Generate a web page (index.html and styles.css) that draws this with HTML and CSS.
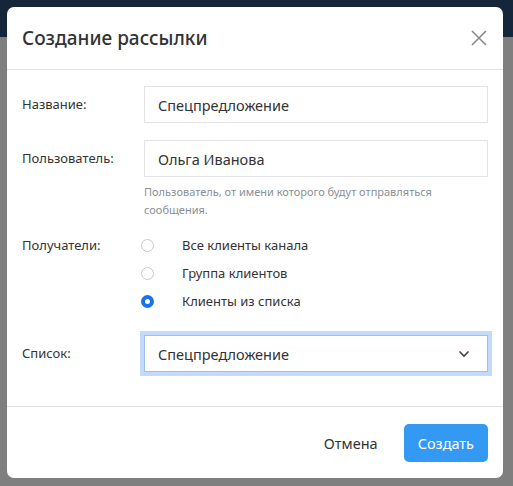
FILE: index.html
```html
<!DOCTYPE html>
<html lang="ru">

<head>
    <meta charset="UTF-8">
    <meta name="viewport" content="width=device-width, initial-scale=1.0">
    <title>Создание рассылки</title>
    <link rel="stylesheet" href="styles.css">
</head>

<body>
    <div class="topbar"></div>

    <div class="overlay">
        <div class="modal">
            <!-- Header -->
            <div class="modal-header">
                <h2>Создание рассылки</h2>
                <button class="close" aria-label="Закрыть">
                    <svg width="16" height="16" viewBox="0 0 16 16">
                        <path d="M1 1 L15 15 M15 1 L1 15" stroke="#8a8a8a" stroke-width="1.6" fill="none" />
                    </svg>
                </button>
            </div>

            <!-- Body -->
            <div class="modal-body">
                <div class="row">
                    <label class="label">Название:</label>
                    <div class="field">
                        <input type="text" class="input" value="Спецпредложение">
                    </div>
                </div>

                <div class="row with-help">
                    <label class="label">Пользователь:</label>
                    <div class="field">
                        <input type="text" class="input" value="Ольга Иванова">
                        <div class="help">Пользователь, от имени которого будут отправляться сообщения.</div>
                    </div>
                </div>

                <div class="row radio-row">
                    <label class="label">Получатели:</label>
                    <div class="field">
                        <label class="radio"><span class="dot"></span>Все клиенты канала</label>
                        <label class="radio"><span class="dot"></span>Группа клиентов</label>
                        <label class="radio"><span class="dot checked"></span>Клиенты из списка</label>
                    </div>
                </div>

                <div class="row">
                    <label class="label">Список:</label>
                    <div class="field">
                        <div class="select">
                            <span>Спецпредложение</span>
                            <svg width="12" height="8" viewBox="0 0 12 8">
                                <path d="M1.5 1.5 L6 6 L10.5 1.5" stroke="#444" stroke-width="1.6" fill="none" />
                            </svg>
                        </div>
                    </div>
                </div>
            </div>

            <!-- Footer -->
            <div class="modal-footer">
                <button class="btn-link">Отмена</button>
                <button class="btn-primary">Создать</button>
            </div>
        </div>
    </div>
</body>

</html>
```

FILE: styles.css
```css
body {
    margin: 0;
    padding: 0;
    font-family: "Noto Sans", "Open Sans", sans-serif;
    background: #7f7f7f;
    color: #333;
    height: 486px;
    overflow: hidden;
}

.topbar {
    height: 37px;
    background: #15263a;
}

.overlay {
    margin-top: -30px;
    padding: 0 10px 0 7px;
}

.modal {
    width: 496px;
    background: #fff;
    border-radius: 7px;
}

.modal-header {
    display: flex;
    align-items: center;
    justify-content: space-between;
    height: 62px;
    padding: 0 16px 0 15px;
    border-bottom: 1px solid #e2e2e2;
}

.modal-header h2 {
    margin: 0;
    font-size: 19px;
    font-weight: 500;
    color: #333;
}

.close {
    border: none;
    background: none;
    padding: 0;
    display: flex;
}

.modal-body {
    padding: 16px 15px 34px 15px;
}

.row {
    display: flex;
    margin-bottom: 17px;
}

.row.with-help {
    margin-bottom: 12px;
}

.row.radio-row {
    margin-bottom: 20px;
}

.row:last-child {
    margin-bottom: 0;
}

.label {
    width: 122px;
    font-size: 13px;
    color: #333;
    line-height: 37px;
}

.radio-row .label {
    line-height: 28px;
}

.field {
    flex: 1;
}

.input {
    display: block;
    width: 100%;
    height: 37px;
    box-sizing: border-box;
    border: 1px solid #e3e3e3;
    padding: 0 13px;
    font-family: inherit;
    font-size: 14.5px;
    color: #333;
    outline: none;
}

.help {
    margin-top: 6px;
    font-size: 11px;
    line-height: 18px;
    color: #8b8f96;
}

.radio {
    display: flex;
    align-items: center;
    height: 28px;
    font-size: 13px;
    color: #333;
}

.dot {
    width: 11px;
    height: 11px;
    border: 1px solid #c8c8c8;
    border-radius: 50%;
    margin-left: -3px;
    margin-right: 28px;
}

.dot.checked {
    width: 5px;
    height: 5px;
    border: 4px solid #1a73e8;
}

.select {
    display: flex;
    align-items: center;
    justify-content: space-between;
    height: 37px;
    box-sizing: border-box;
    border: 1px solid #9ec0ea;
    box-shadow: 0 0 0 4px #c3dbfa;
    padding: 0 17px 0 13px;
    font-size: 14.5px;
    color: #333;
}

.modal-footer {
    display: flex;
    justify-content: flex-end;
    align-items: center;
    gap: 26px;
    height: 71px;
    padding: 0 15px;
    border-top: 1px solid #e2e2e2;
}

.btn-link {
    border: none;
    background: none;
    font-family: inherit;
    font-size: 14.5px;
    color: #333;
    padding: 0;
}

.btn-primary {
    border: none;
    background: #3399f3;
    color: #fff;
    font-family: inherit;
    font-size: 14.5px;
    height: 38px;
    padding: 0 14px;
    border-radius: 5px;
}
```
